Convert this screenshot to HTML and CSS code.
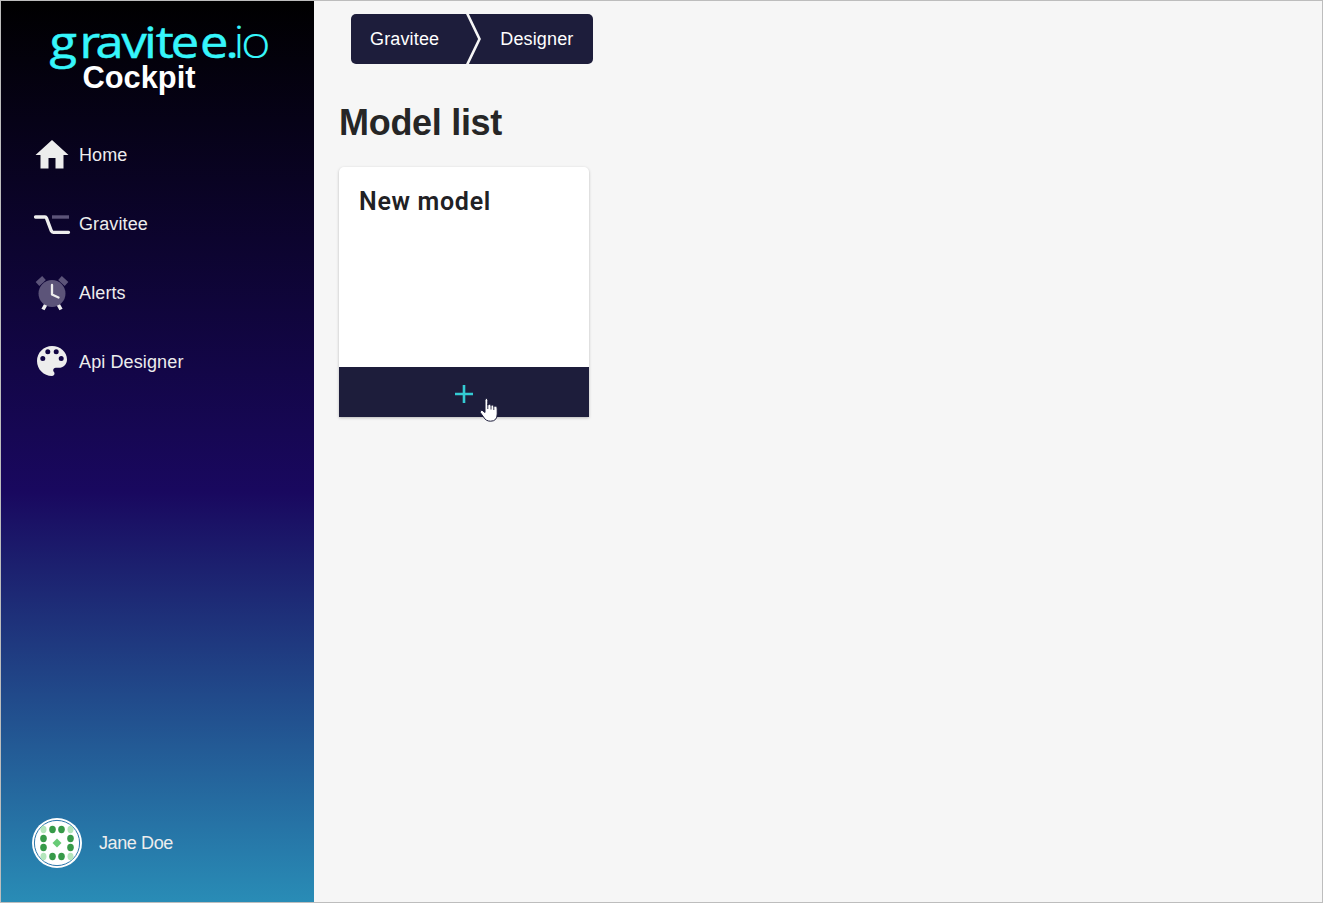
FILE: index.html
```html
<!DOCTYPE html>
<html lang="en">
<head>
<meta charset="utf-8">
<title>Gravitee.io Cockpit</title>
<link rel="stylesheet" href="styles.css">
</head>
<body>
<div class="app">
  <aside class="sidebar">
    <svg class="logo" viewBox="0 0 313 110">
      <g class="logo-name" transform="scale(1.15 1)">
        <text y="57" x="42.200 68.300 82.200 104.900 124.300 134.500 147.600 173 195.300 202 208.800">gravitee.<tspan class="logo-light">io</tspan></text>
      </g>
      <text class="logo-product" x="81.500" y="87" textLength="113" lengthAdjust="spacingAndGlyphs">Cockpit</text>
    </svg>
    <nav class="menu">
      <a class="item"><svg class="icon" viewBox="0 0 40 40"><path fill="#ededed" d="M20 5 36.500 20H31.500V33.500H23.500V23H16.500V33.500H8.500V20H3.500Z"/></svg><span class="label">Home</span></a>
      <a class="item"><svg class="icon" viewBox="0 0 40 40"><path stroke="#5c5479" stroke-width="3.400" d="M20 13H37"/><path fill="none" stroke="#ededed" stroke-width="3.300" stroke-linecap="round" stroke-linejoin="round" d="M3.500 13H13Q14 13 14.500 14.200L19.300 26.800Q20 28.300 21.300 28.300H36.500"/></svg><span class="label">Gravitee</span></a>
      <a class="item"><svg class="icon" viewBox="0 0 40 40"><circle cx="20" cy="20.500" r="13.500" fill="#5c5479"/><path stroke="#5c5479" stroke-width="5.400" stroke-linejoin="round" d="M5.500 11 12 5M28 5 34.500 11"/><path fill="none" stroke="#ededed" stroke-width="2.300" stroke-linecap="round" stroke-linejoin="round" d="M20 12V21.500L26.500 24.500"/><path stroke="#ededed" stroke-width="3.600" d="M13.500 32 11 36.500M26.500 32 29 36.500"/></svg><span class="label">Alerts</span></a>
      <a class="item"><svg class="icon" viewBox="0 0 40 40"><path fill="#ededed" fill-rule="evenodd" d="M20 4C11.700 4 5 10.700 5 19S11.700 34 20 34C21.400 34 22.500 32.900 22.500 31.500 22.500 30.800 22.200 30.300 21.800 29.800 21.500 29.400 21.200 28.900 21.200 28.200 21.200 26.800 22.300 25.700 23.700 25.700H26.700C31.300 25.700 35 22 35 17.400 35 10 28.300 4 20 4ZM10.800 14A2.500 2.500 0 1 1 10.800 19A2.500 2.500 0 1 1 10.800 14ZM15.800 7.300A2.500 2.500 0 1 1 15.800 12.300A2.500 2.500 0 1 1 15.800 7.300ZM24.200 7.300A2.500 2.500 0 1 1 24.200 12.300A2.500 2.500 0 1 1 24.200 7.300ZM29.200 14A2.500 2.500 0 1 1 29.200 19A2.500 2.500 0 1 1 29.200 14Z"/></svg><span class="label">Api Designer</span></a>
    </nav>
    <div class="user">
      <svg class="avatar" viewBox="0 0 50 50">
        <circle cx="25" cy="25" r="25" fill="#fff"/>
        <circle cx="25" cy="25" r="22.600" fill="none" stroke="#2c76aa" stroke-width="1"/>
        <g fill="#b5e6bc"><ellipse cx="11.500" cy="11.500" rx="3" ry="3.700"/><ellipse cx="38.500" cy="11.500" rx="3" ry="3.700"/><ellipse cx="11.500" cy="38.500" rx="3" ry="3.700"/><ellipse cx="38.500" cy="38.500" rx="3" ry="3.700"/></g>
        <g fill="#379a49"><ellipse cx="20.500" cy="11.500" rx="3.300" ry="3.700"/><ellipse cx="29.500" cy="11.500" rx="3.300" ry="3.700"/><ellipse cx="11.500" cy="20.500" rx="3.300" ry="3.700"/><ellipse cx="38.500" cy="20.500" rx="3.300" ry="3.700"/><ellipse cx="11.500" cy="29.500" rx="3.300" ry="3.700"/><ellipse cx="38.500" cy="29.500" rx="3.300" ry="3.700"/><ellipse cx="20.500" cy="38.500" rx="3.300" ry="3.700"/><ellipse cx="29.500" cy="38.500" rx="3.300" ry="3.700"/></g>
        <path fill="#68cb76" d="M25 20.500 29.500 25 25 29.500 20.500 25Z"/>
      </svg>
      <span class="user-name">Jane Doe</span>
    </div>
  </aside>
  <main class="content">
    <nav class="crumbs">
      <span class="crumb">Gravitee</span>
      <svg class="chevron" viewBox="0 0 16 50"><path fill="none" stroke="#f6f6f6" stroke-width="2.600" d="M1 -1 13.500 25 1 51"/></svg>
      <span class="crumb">Designer</span>
    </nav>
    <h1 class="title">Model list</h1>
    <section class="card">
      <h2 class="card-title">New model</h2>
      <div class="card-action">
        <svg class="plus" viewBox="0 0 18 18"><path stroke="#34cbd3" stroke-width="2.600" d="M9 0V18M0 9H18"/></svg>
        <svg class="pointer" viewBox="0 0 18 24"><path fill="#fff" stroke="#1d1d3b" stroke-width="1" d="M5 2.500Q5 .5 6.400 .5T7.800 2.500V7Q9.500 5.500 11 7.200 12.500 6.300 13.800 8.200 17.200 7.500 17.200 11V16Q17.200 23.200 10.500 23.200 5.800 23.200 3.500 19L.3 14.500Q-.2 12 2 12.200L5 14.500Z"/><path stroke="#1d1d3b" stroke-width=".9" d="M7.800 6V11M11 7V11.500M13.800 8V12"/></svg>
      </div>
    </section>
  </main>
</div>
</body>
</html>
```
FILE: styles.css
```css
* { box-sizing: border-box; }
body { margin: 0; font-family: "Liberation Sans", Arial, sans-serif; }
.app { display: flex; width: 1323px; height: 903px; border: 1px solid #bdbdbd; background: #f6f6f6; }
.sidebar { width: 313px; display: flex; flex-direction: column; color: #ededed; font-size: 18px; background: linear-gradient(180deg, #000 0%, #19085f 54.500%, #298cb6 100%); }
.logo { width: 313px; height: 110px; }
.logo-name { font: 400 44px "Open Sans", sans-serif; fill: #36f6fb; stroke: #36f6fb; stroke-width: .5px; }
.logo-light { font-weight: 300; stroke: none; }
.logo-product { font: 700 31px "Liberation Sans", sans-serif; fill: #fff; }
.menu { padding: 9px 0 0 31px; display: flex; flex-direction: column; }
.item { height: 69px; display: flex; align-items: center; gap: 7px; }
.icon { width: 40px; height: 40px; }
.label { padding-top: 2px; letter-spacing: .12px; }
.user { margin: auto 0 34px 31px; display: flex; align-items: center; gap: 17px; }
.user-name { letter-spacing: -.4px; }
.avatar { width: 50px; height: 50px; }
.content { flex: 1; padding: 13px 25px; }
.crumbs { display: flex; align-items: center; width: 242px; height: 50px; margin-left: 12px; padding-left: 19px; border-radius: 5px; background: #1d1d3b; color: #fff; font-size: 18px; letter-spacing: .15px; }
.chevron { width: 16px; height: 50px; margin: 0 18px 0 27px; }
.title { margin: 37px 0 23px; font-size: 36px; line-height: 43px; color: #262626; letter-spacing: -.3px; }
.card { width: 250px; height: 250px; display: flex; flex-direction: column; justify-content: space-between; background: #fff; border-radius: 5px 5px 0 0; box-shadow: 0 1px 3px rgba(0,0,0,.25); }
.card-title { margin: 19px 20px; font: 600 25px/32px Roboto, sans-serif; letter-spacing: .7px; color: #212124; }
.card-action { position: relative; height: 50px; display: flex; align-items: center; justify-content: center; background: #1d1d3b; }
.plus { width: 18px; height: 18px; margin: 3px 1px 0 0; }
.pointer { position: absolute; left: 141px; top: 31px; width: 18px; height: 24px; }
```
